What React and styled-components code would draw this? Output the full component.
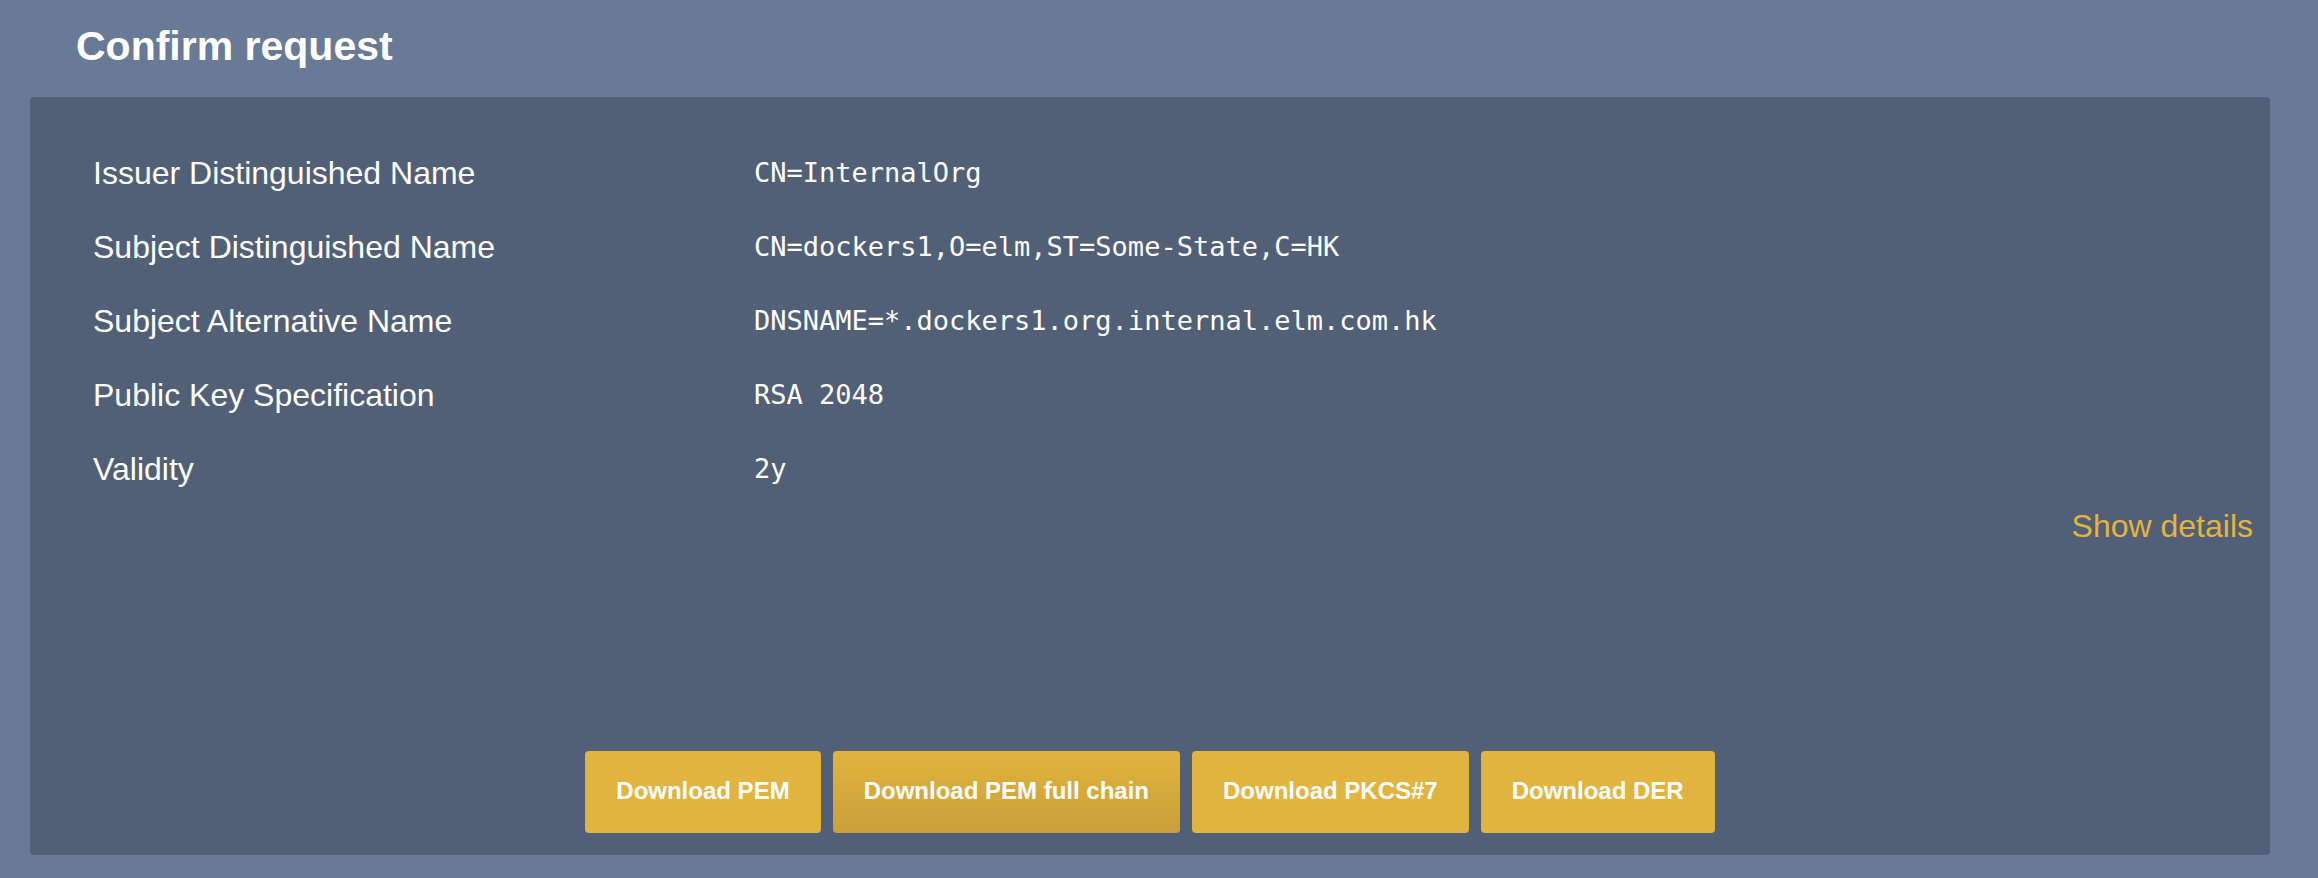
import React from 'react';
import styled, { createGlobalStyle } from 'styled-components';

const GlobalStyle = createGlobalStyle`
  html, body {
    margin: 0;
    padding: 0;
    background: #687a96;
    font-family: "Liberation Sans", Arial, Helvetica, sans-serif;
  }
`;

const rows = [
  { label: 'Issuer Distinguished Name', value: 'CN=InternalOrg' },
  { label: 'Subject Distinguished Name', value: 'CN=dockers1,O=elm,ST=Some-State,C=HK' },
  { label: 'Subject Alternative Name', value: 'DNSNAME=*.dockers1.org.internal.elm.com.hk' },
  { label: 'Public Key Specification', value: 'RSA 2048' },
  { label: 'Validity', value: '2y' },
];

const buttons = [
  { text: 'Download PEM' },
  { text: 'Download PEM full chain', hover: true },
  { text: 'Download PKCS#7' },
  { text: 'Download DER' },
];

const App = () => {
  return (
    <Page>
      <GlobalStyle />
      <Title>Confirm request</Title>
      <Panel>
        <Details>
          <InfoGrid>
            {rows.map((row) => (
              <React.Fragment key={row.label}>
                <Label>{row.label}</Label>
                <Value>{row.value}</Value>
              </React.Fragment>
            ))}
          </InfoGrid>
          <DetailsLink>Show details</DetailsLink>
        </Details>
        <ButtonBar>
          {buttons.map((b) => (
            <Button key={b.text} $hover={b.hover}>
              {b.text}
            </Button>
          ))}
        </ButtonBar>
      </Panel>
    </Page>
  );
};

export default App;

const Page = styled.div`
  padding: 26px 48px 23px 30px;
  min-height: 878px;
  box-sizing: border-box;
`;

const Title = styled.h1`
  margin: 0 0 30px 46px;
  font-size: 41px;
  line-height: 41px;
  font-weight: bold;
  color: #ffffff;
`;

const Panel = styled.div`
  display: flex;
  flex-direction: column;
  height: 758px;
  box-sizing: border-box;
  background: #515f77;
  border-radius: 4px;
  padding-bottom: 22px;
`;

const Details = styled.div`
  display: flex;
  flex-direction: column;
  padding: 54px 17px 0 63px;
`;

const InfoGrid = styled.div`
  display: grid;
  grid-template-columns: 661px 1fr;
  row-gap: 30px;
`;

const Label = styled.div`
  font-size: 32px;
  line-height: 44px;
  color: #ffffff;
`;

const Value = styled.div`
  font-family: "DejaVu Sans Mono", "Liberation Mono", monospace;
  font-size: 27px;
  line-height: 44px;
  color: #ffffff;
`;

const DetailsLink = styled.a`
  align-self: flex-end;
  margin-top: 13px;
  font-size: 32px;
  line-height: 44px;
  color: #e3b43e;
  cursor: pointer;
`;

const ButtonBar = styled.div`
  display: flex;
  justify-content: center;
  gap: 12px;
  margin-top: auto;
`;

const Button = styled.button`
  height: 82px;
  padding: 0 31px 3px;
  border: none;
  border-radius: 4px;
  font-family: "Liberation Sans", Arial, Helvetica, sans-serif;
  font-size: 24px;
  font-weight: bold;
  color: #ffffff;
  background: ${({ $hover }) =>
    $hover ? 'linear-gradient(to bottom, #e0b43e, #c9a03a)' : '#e0b43e'};
  cursor: pointer;
`;
